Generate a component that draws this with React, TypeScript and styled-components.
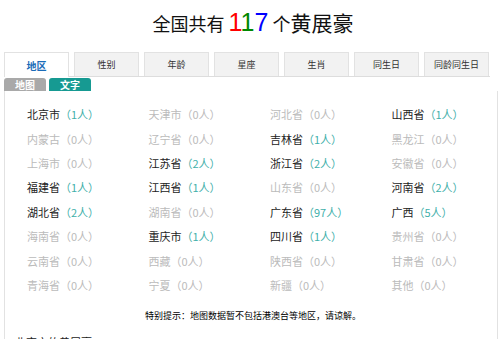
import React from "react";
import styled, { createGlobalStyle } from "styled-components";

interface IRegion {
  name: string;
  count: number;
}

const regions: IRegion[] = [
  { name: "北京市", count: 1 },
  { name: "天津市", count: 0 },
  { name: "河北省", count: 0 },
  { name: "山西省", count: 1 },
  { name: "内蒙古", count: 0 },
  { name: "辽宁省", count: 0 },
  { name: "吉林省", count: 1 },
  { name: "黑龙江", count: 0 },
  { name: "上海市", count: 0 },
  { name: "江苏省", count: 2 },
  { name: "浙江省", count: 2 },
  { name: "安徽省", count: 0 },
  { name: "福建省", count: 1 },
  { name: "江西省", count: 1 },
  { name: "山东省", count: 0 },
  { name: "河南省", count: 2 },
  { name: "湖北省", count: 2 },
  { name: "湖南省", count: 0 },
  { name: "广东省", count: 97 },
  { name: "广西", count: 5 },
  { name: "海南省", count: 0 },
  { name: "重庆市", count: 1 },
  { name: "四川省", count: 1 },
  { name: "贵州省", count: 0 },
  { name: "云南省", count: 0 },
  { name: "西藏", count: 0 },
  { name: "陕西省", count: 0 },
  { name: "甘肃省", count: 0 },
  { name: "青海省", count: 0 },
  { name: "宁夏", count: 0 },
  { name: "新疆", count: 0 },
  { name: "其他", count: 0 },
];

const tabs = ["地区", "性别", "年龄", "星座", "生肖", "同生日", "同龄同生日"];

function App() {
  return (
    <>
      <GlobalStyle />
      <StyledPage>
        <StyledTitle>
          全国共有 <Digit color="#f00">1</Digit>
          <Digit color="#080">1</Digit>
          <Digit color="#00f">7</Digit> 个<StyledName>黄展豪</StyledName>
        </StyledTitle>
        <StyledTabs>
          {tabs.map((t, i) => (
            <StyledTab key={t} active={i === 0}>
              {t}
            </StyledTab>
          ))}
        </StyledTabs>
        <StyledSubTabs>
          <StyledSubTab active={false}>地图</StyledSubTab>
          <StyledSubTab active>文字</StyledSubTab>
        </StyledSubTabs>
        <StyledPanel>
          <StyledGrid>
            {regions.map((r) => (
              <StyledItem key={r.name} has={r.count > 0}>
                {r.name}
                <span className="count">（{r.count}人）</span>
              </StyledItem>
            ))}
          </StyledGrid>
          <StyledNote>特别提示：地图数据暂不包括港澳台等地区，请谅解。</StyledNote>
          <StyledNext>北京市的黄展豪</StyledNext>
        </StyledPanel>
      </StyledPage>
    </>
  );
}

export default App;

const GlobalStyle = createGlobalStyle`
  body {
    margin: 0;
    background: #fff;
    font-family: "Noto Sans CJK SC", "Noto Sans", sans-serif;
    overflow: hidden;
  }
`;

const StyledPage = styled.div`
  width: 499px;
  height: 339px;
  overflow: hidden;
  padding: 0 1px 0 4px;
  box-sizing: border-box;
`;

const StyledTitle = styled.h1`
  margin: 0;
  height: 46px;
  padding-top: 4px;
  box-sizing: border-box;
  text-align: center;
  font-size: 18px;
  font-weight: normal;
  color: #111;
  line-height: 36px;
  padding-left: 4px;
`;

const Digit = styled.span<{ color: string }>`
  color: ${({ color }) => color};
  font-family: "Liberation Sans", sans-serif;
  font-size: 25px;
`;

const StyledName = styled.span`
  font-size: 21px;
`;

const StyledTabs = styled.div`
  display: flex;
  gap: 5px;
  margin-top: 6px;
  border-bottom: 1px solid #ddd;
  height: 24px;
  margin-right: 8px;
`;

const StyledTab = styled.div<{ active: boolean }>`
  width: 65px;
  height: ${({ active }) => (active ? "25px" : "24px")};
  box-sizing: border-box;
  border: 1px solid #e2e2e2;
  border-bottom: none;
  background: ${({ active }) => (active ? "#fff" : "#f2f2f2")};
  color: ${({ active }) => (active ? "#1a6cb8" : "#333")};
  font-weight: ${({ active }) => (active ? "bold" : "normal")};
  font-size: ${({ active }) => (active ? "10px" : "9px")};
  display: flex;
  align-items: center;
  justify-content: center;
`;

const StyledSubTabs = styled.div`
  display: flex;
  gap: 3px;
  height: 13px;
  margin-top: 1px;
`;

const StyledSubTab = styled.div<{ active: boolean }>`
  width: 42px;
  height: 13px;
  border-radius: 3px 3px 0 0;
  background: ${({ active }) => (active ? "#169a92" : "#a9a9a9")};
  color: #fff;
  font-size: 10px;
  font-weight: bold;
  line-height: 13px;
  text-align: center;
`;

const StyledPanel = styled.div`
  border-left: 1px solid #e2e2e2;
  border-right: 1px solid #e2e2e2;
  padding: 11px 0 0 22px;
  height: 260px;
`;

const StyledGrid = styled.div`
  display: grid;
  grid-template-columns: repeat(4, 121.5px);
  grid-auto-rows: 24.4px;
  align-items: center;
`;

const StyledItem = styled.div<{ has: boolean }>`
  font-size: 11px;
  color: ${({ has }) => (has ? "#222" : "#bbb")};
  white-space: nowrap;
  .count {
    color: ${({ has }) => (has ? "#3fb0aa" : "#bbb")};
  }
`;

const StyledNote = styled.div`
  margin: 12px 0 0 -22px;
  text-align: center;
  font-size: 9px;
  color: #000;
  padding-left: 4px;
`;

const StyledNext = styled.div`
  margin: 12px 0 0 -12px;
  font-size: 11px;
  color: #222;
`;
